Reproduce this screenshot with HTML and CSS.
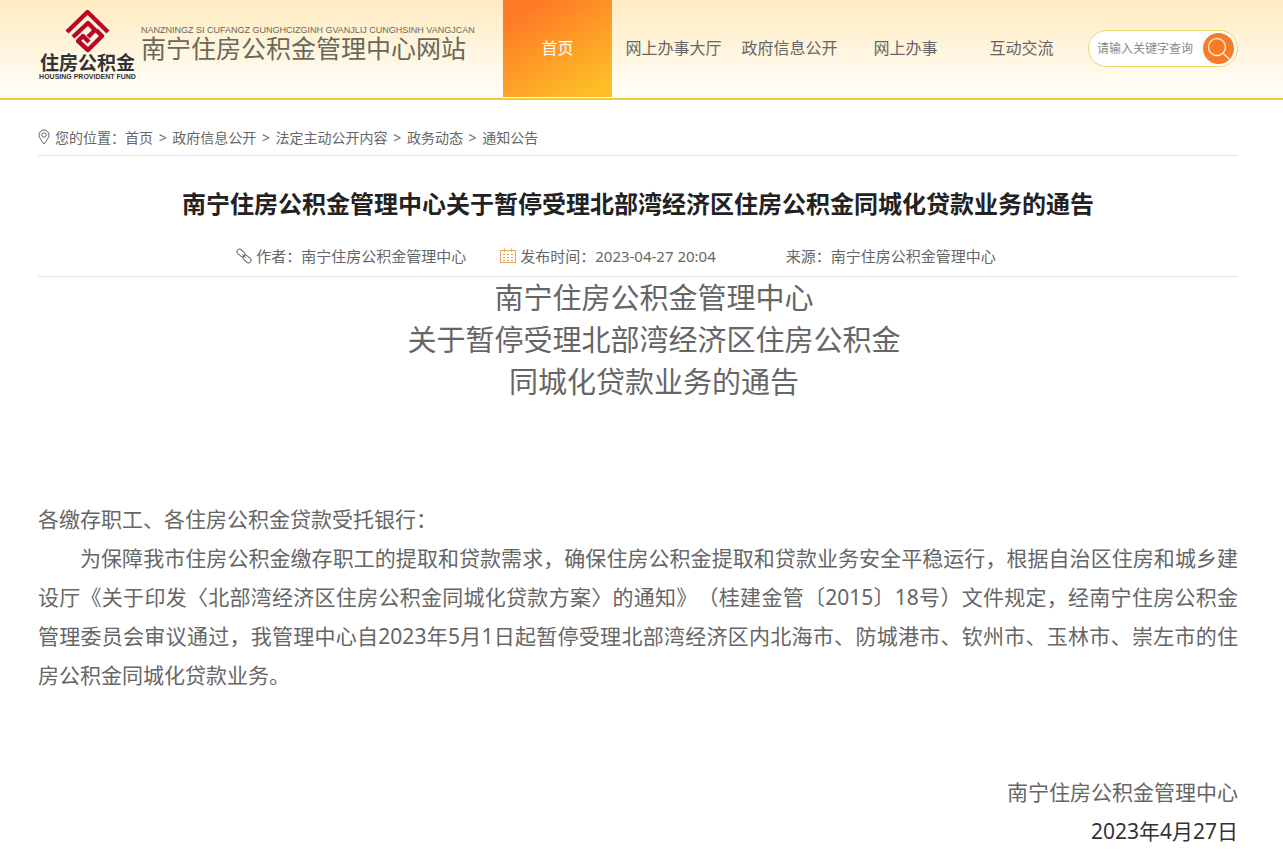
FILE: index.html
```html
<!DOCTYPE html>
<html lang="zh-CN">
<head>
<meta charset="UTF-8">
<meta name="viewport" content="width=device-width, initial-scale=1.0">
<title>南宁住房公积金管理中心网站</title>
<link rel="stylesheet" href="styles.css">
</head>
<body>

<header class="header">
    <div class="wrap header-inner">
        <a href="#" class="logo">
            <svg class="logo-mark" viewBox="0 0 46 46" aria-hidden="true">
                <g fill="none" stroke="#b5092c" stroke-width="4.4" stroke-linejoin="round">
                    <path d="M2 24 L22.500 4 L43 24"/>
                    <path d="M8 29 L23 15 L30 22 L23 29"/>
                    <path d="M31 22 L37 28 L23 42 L13 33 L18 28 L24 34"/>
                </g>
            </svg>
            <span class="logo-name">住房公积金</span>
            <span class="logo-en">HOUSING PROVIDENT FUND</span>
        </a>
        <div class="site-name">
            <span class="site-zhuang">NANZNINGZ SI CUFANGZ GUNGHCIZGINH GVANJLIJ CUNGHSINH VANGJCAN</span>
            <span class="site-cn">南宁住房公积金管理中心网站</span>
        </div>
        <nav class="nav">
            <a href="#" class="active">首页</a>
            <a href="#">网上办事大厅</a>
            <a href="#">政府信息公开</a>
            <a href="#">网上办事</a>
            <a href="#">互动交流</a>
        </nav>
        <form class="search">
            <input type="text" placeholder="请输入关键字查询" aria-label="请输入关键字查询">
            <button type="button" aria-label="搜索">
                <svg viewBox="0 0 31 31" fill="none" stroke="#ffe9d0" stroke-width="1.4" stroke-linecap="round">
                    <circle cx="14" cy="14" r="8.5"/>
                    <path d="M20 20 L26 26"/>
                </svg>
            </button>
        </form>
    </div>
</header>

<main class="wrap">
    <div class="crumbs">
        <svg class="icon-pin" viewBox="0 0 12 16" fill="none" stroke="#666">
            <path d="M6 15 C4 12 1 9 1 6 A5 5 0 0 1 11 6 C11 9 8 12 6 15 Z"/>
            <circle cx="6" cy="6" r="2.2"/>
        </svg>
        <span>您的位置：<a href="#">首页</a> <b>&gt;</b> <a href="#">政府信息公开</a> <b>&gt;</b> <a href="#">法定主动公开内容</a> <b>&gt;</b> <a href="#">政务动态</a> <b>&gt;</b> <a href="#">通知公告</a></span>
    </div>

    <h1>南宁住房公积金管理中心关于暂停受理北部湾经济区住房公积金同城化贷款业务的通告</h1>

    <div class="meta">
        <span class="author">
            <svg viewBox="0 0 16 16" fill="none" stroke="#666">
                <rect x="0.5" y="2.5" width="9" height="5" rx="2.5" transform="rotate(42 5 5)"/>
                <rect x="6.5" y="8.5" width="9" height="5" rx="2.5" transform="rotate(42 11 11)"/>
                <path d="M6 6 L10 10"/>
            </svg>
            作者：南宁住房公积金管理中心
        </span>
        <span class="time">
            <svg viewBox="0 0 16 16" fill="none" stroke="#e8a35c">
                <path d="M0.500 2.500 H15.500 V14.500 H0.500 Z M4.500 0.500 V4 M11.500 0.500 V4"/>
                <path d="M3 6.500 H13 M3 9.500 H13 M3 12.500 H13" stroke-dasharray="2 2"/>
            </svg>
            发布时间：2023-04-27 20:04
        </span>
        <span class="source">来源：南宁住房公积金管理中心</span>
    </div>

    <article class="content">
        <h2>南宁住房公积金管理中心<br>关于暂停受理北部湾经济区住房公积金<br>同城化贷款业务的通告</h2>
        <p>各缴存职工、各住房公积金贷款受托银行：</p>
        <p class="indent">为保障我市住房公积金缴存职工的提取和贷款需求，确保住房公积金提取和贷款业务安全平稳运行，根据自治区住房和城乡建设厅《关于印发〈北部湾经济区住房公积金同城化贷款方案〉的通知》（桂建金管〔2015〕18号）文件规定，经南宁住房公积金管理委员会审议通过，我管理中心自2023年5月1日起暂停受理北部湾经济区内北海市、防城港市、钦州市、玉林市、崇左市的住房公积金同城化贷款业务。</p>
        <div class="sign">
            <p>南宁住房公积金管理中心</p>
            <p class="date">2023年4月27日</p>
        </div>
    </article>
</main>

</body>
</html>
```
FILE: styles.css
```css
* {
    box-sizing: border-box;
    margin: 0;
    padding: 0;
}
body {
    font-family: "Noto Sans", "Noto Sans CJK SC", sans-serif;
    font-size: 14px;
    color: #666;
    background-color: #fff;
    text-spacing-trim: space-all;
}
a {
    color: inherit;
    text-decoration: none;
}
.wrap {
    padding: 0 45px 0 38px;
}
.header {
    background: linear-gradient(#ffebc0, #fff8e6 65%, #fffefb);
    border-bottom: 2px solid #f0cb35;
}
.header-inner {
    display: flex;
    height: 98px;
}
.logo {
    display: flex;
    flex-direction: column;
    align-items: center;
    width: 99px;
    padding-top: 8px;
    color: #333;
    white-space: nowrap;
}
.logo-mark {
    width: 46px;
    height: 46px;
}
.logo-name {
    font-size: 19px;
    line-height: 19px;
    font-weight: bold;
}
.logo-en {
    font-family: "Liberation Sans", Arial, sans-serif;
    font-size: 7px;
    line-height: 8px;
    font-weight: bold;
}
.site-name {
    width: 329px;
    margin: 24px 33px 0 4px;
    color: #6b675c;
    white-space: nowrap;
}
.site-name span {
    display: block;
}
.site-zhuang {
    font-family: "Liberation Sans", Arial, sans-serif;
    font-size: 9px;
    line-height: 12px;
}
.site-cn {
    font-size: 25px;
    line-height: 25px;
}
.nav {
    display: flex;
    flex: 1;
    gap: 7px;
}
.nav a {
    flex: 1;
    height: 97px;
    line-height: 97px;
    font-size: 16px;
    text-align: center;
    white-space: nowrap;
}
.nav a.active {
    color: #fff;
    background: linear-gradient(150deg, #ff7a26 15%, #fdbf26 90%);
}
.search {
    display: flex;
    align-items: center;
    width: 150px;
    height: 37px;
    margin: 30px 0 0 12px;
    padding: 0 3px 0 8px;
    background-color: #fff;
    border: 1px solid #ecd667;
    border-radius: 19px;
}
.search input {
    flex: 1;
    min-width: 0;
    font-family: inherit;
    font-size: 12px;
    border: none;
    outline: none;
    background: none;
}
.search input::placeholder {
    color: #888;
}
.search button {
    width: 31px;
    height: 31px;
    border: none;
    border-radius: 50%;
    background-color: #fa7b26;
    cursor: pointer;
}
.search svg {
    display: block;
}
.crumbs {
    display: flex;
    align-items: center;
    gap: 5px;
    height: 56px;
    padding-top: 19px;
    border-bottom: 1px solid #e5e5e5;
}
.crumbs b {
    margin: 0 2px;
    font-weight: normal;
}
.icon-pin {
    width: 12px;
    height: 16px;
}
h1 {
    padding: 28px 0 22px;
    font-size: 24px;
    line-height: 40px;
    text-align: center;
    color: #222;
}
.meta {
    display: flex;
    justify-content: center;
    height: 31px;
    padding-right: 44px;
    font-size: 15px;
    line-height: 20px;
    border-bottom: 1px solid #e5e5e5;
}
.meta span {
    display: flex;
    align-items: center;
    gap: 4px;
    height: 20px;
    white-space: nowrap;
}
.meta svg {
    width: 16px;
    height: 16px;
}
.meta .author {
    margin-right: 34px;
}
.meta .time {
    margin-right: 70px;
}
.content {
    font-size: 21px;
    line-height: 39px;
}
h2 {
    margin-bottom: 97px;
    padding-left: 32px;
    font-size: 29px;
    line-height: 42px;
    font-weight: normal;
    text-align: center;
}
.indent {
    text-indent: 2em;
    text-align: justify;
}
.sign {
    padding: 78px 0 7px;
    text-align: right;
}
.date {
    color: #333;
}
```
